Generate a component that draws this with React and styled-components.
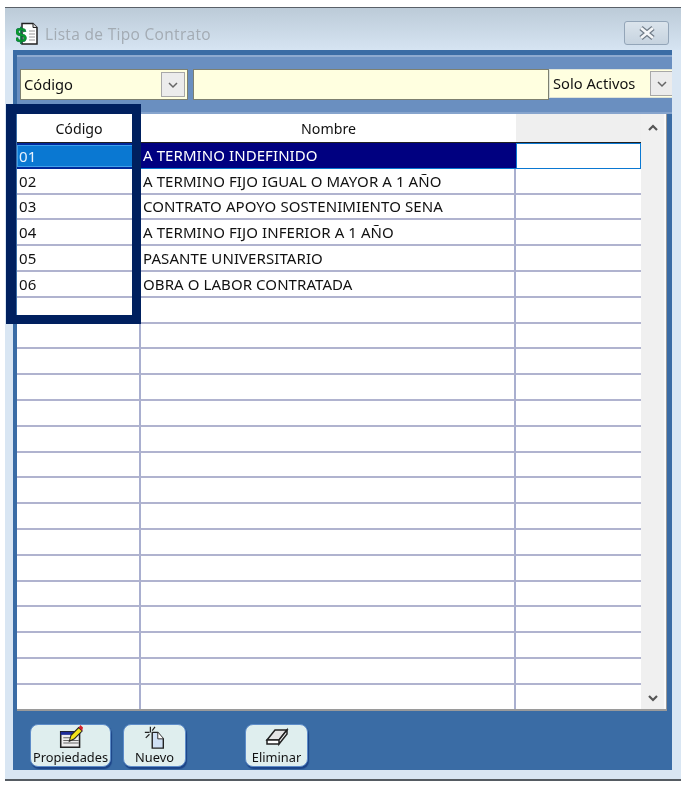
import React from "react";
import styled, { createGlobalStyle } from "styled-components";

const Global = createGlobalStyle`
  html, body { margin: 0; padding: 0; background: #fff; }
  * { box-sizing: border-box; }
`;

const Page = styled.div`
  width: 690px;
  height: 790px;
  padding: 7px 0 0 5px;
  font-family: "Noto Sans", Tahoma, sans-serif;
  color: #111;
  filter: blur(0.35px);
`;

const Win = styled.div`
  position: relative;
  width: 676px;
  height: 774px;
  border-top: 1px solid #5a6068;
  border-bottom: 2px solid #555b62;
  background: #d9e6f3;
  display: flex;
  flex-direction: column;
`;

const TitleBar = styled.div`
  height: 42px;
  flex: none;
  display: flex;
  align-items: center;
  padding: 9px 12px 0 11px;
  background: linear-gradient(#bccbd8, #d6e4f2);
`;

const TitleText = styled.span`
  margin-left: 5px;
  font-family: "Open Sans", sans-serif;
  font-size: 15.5px;
  letter-spacing: 0.32px;
  color: #a3abb3;
`;

const CloseBtn = styled.div`
  margin-left: auto;
  width: 45px;
  height: 24px;
  margin-top: -1px;
  display: flex;
  align-items: center;
  justify-content: center;
  border: 1px solid #93a5b8;
  border-radius: 3px;
  background: linear-gradient(#dbe4ec, #c6d3df);
`;

const Panel = styled.div`
  flex: none;
  margin: 0 8px;
  width: 659px;
  height: 720px;
  background: #3a6ca5;
  overflow: hidden;
  display: flex;
  flex-direction: column;
`;

const FilterArea = styled.div`
  margin: 5px 0 0 4px;
  height: 59px;
  flex: none;
  background: #6a8fc0;
  border-top: 2px solid #8eaad0;
  display: flex;
  align-items: flex-start;
  padding: 12px 0 0 3px;
  border-bottom: 2px solid #86a4cd;
`;

const Field = styled.div`
  height: ${({ $h }) => $h || 31}px;
  width: ${({ $w }) => $w}px;
  flex: none;
  margin-right: ${({ $gap }) => $gap || 0}px;
  background: #ffffe0;
  border: 1px solid ${({ $flat }) => ($flat ? "#dfe4d8" : "#7d8070")};
  display: flex;
  align-items: center;
  padding: 0 0 2px 3px;
  font-size: 14.7px;
  overflow: hidden;
`;

const ComboArrow = styled.div`
  margin: 2px ${({ $end }) => $end || 2}px 0 auto;
  width: 24px;
  height: 25px;
  flex: none;
  background: #ececec;
  border: 1px solid #a8a8a8;
  display: flex;
  align-items: center;
  justify-content: center;
`;

const GridWrap = styled.div`
  margin-left: 4px;
  width: 650px;
  height: 597px;
  flex: none;
  display: flex;
  background: #fff;
  border-bottom: 2px solid #9a9a9a;
  border-right: 1px solid #9a9a9a;
`;

const Table = styled.div`
  width: 624px;
  flex: none;
  overflow: hidden;
`;

const HeaderRow = styled.div`
  display: grid;
  grid-template-columns: 124px 375px 125px;
  height: 29px;
  border-bottom: 1px solid #222;
`;

const HeaderCell = styled.div`
  background: ${({ $empty }) => ($empty ? "#efefef" : "#fff")};
  display: flex;
  align-items: center;
  justify-content: center;
  font-size: 14.2px;
`;

const Row = styled.div`
  display: grid;
  grid-template-columns: 124px 375px 125px;
  height: 25.8px;
`;

const Cell = styled.div`
  border-right: 2px solid #a9afcf;
  border-bottom: 2px solid #b0b3cf;
  display: flex;
  align-items: center;
  padding-left: 2px;
  font-size: 15px;
  letter-spacing: 0.08px;
  white-space: nowrap;
  &:last-child { border-right: none; }
`;

const KeyCell = styled(Cell)`
  background: #0a78d2;
  color: #e8f3ff;
  border: none;
  border-top: 2px solid #00289a;
  border-bottom: 2px solid #00289a;
  box-shadow: 0 0 0 1px #3fa0ea inset;
`;

const ActiveCell = styled(Cell)`
  background: #000080;
  color: #fff;
  border: none;
  border-bottom: 1px solid #0a78d2;
`;

const EditCell = styled(Cell)`
  background: #fff;
  && { border: 1px solid #0a78d2; }
`;

const Scroll = styled.div`
  width: 25px;
  flex: none;
  background: #f0f0f0;
  border-right: 2px solid #fafafa;
  display: flex;
  flex-direction: column;
  justify-content: space-between;
  align-items: center;
  padding: 8px 0 5px;
`;

const Footer = styled.div`
  flex: 1;
  display: flex;
  align-items: flex-start;
  padding: 13px 0 0 17px;
`;

const ActionBtn = styled.div`
  width: ${({ $w }) => $w}px;
  height: 43px;
  margin-right: ${({ $gap }) => $gap}px;
  flex: none;
  border-radius: 8px;
  background: #dfeeee;
  border: 1px solid #5d8cc8;
  box-shadow: 1px 2px 1px #1c4488;
  display: flex;
  flex-direction: column;
  align-items: center;
  justify-content: flex-end;
  padding-bottom: 1px;
  font-size: 12.8px;
  line-height: 16px;
  white-space: nowrap;
`;

const Highlight = styled.div`
  position: absolute;
  left: 1px;
  top: 96px;
  width: 135px;
  height: 220px;
  border: solid #00205f;
  border-width: 10px 9px 9px 10px;
  pointer-events: none;
`;

const DollarDoc = () => (
  <svg width="24" height="26" viewBox="0 0 24 26">
    <path d="M6 2.500h11l4 4v16.500H6z" fill="#fff" stroke="#222" strokeWidth="1.500" />
    <path d="M17 2.500v4h4" fill="#ddd" stroke="#222" />
    <path d="M13 10h6M13 13h6M13 16h6M13 19h6" stroke="#999" strokeWidth="1" />
    <text x="-1" y="21" fontFamily="Liberation Sans, sans-serif" fontSize="21" fontWeight="700" fill="#0a9a2c" stroke="#064" strokeWidth="0.500">$</text>
  </svg>
);

const CloseX = () => (
  <svg width="18" height="14" viewBox="0 0 18 14">
    <path d="M3 2l12 10M15 2L3 12" stroke="#6f7a86" strokeWidth="5" />
    <path d="M3 2l12 10M15 2L3 12" stroke="#f4f6f8" strokeWidth="2.800" />
  </svg>
);

const Chevron = ({ up, color = "#666", width = 1.500, size = 12 }) => (
  <svg width={size} height={size} viewBox="0 0 12 12">
    <path d={up ? "M2 8l4-4 4 4" : "M2 4l4 4 4-4"} fill="none" stroke={color} strokeWidth={width} />
  </svg>
);

const PropsIcon = () => (
  <svg width="28" height="28" viewBox="0 0 28 28">
    <path d="M2 8h22v18H2z" fill="#eee" stroke="#222" strokeWidth="1.800" />
    <path d="M2 8h22v3.500H2z" fill="#1e2c9a" />
    <path d="M5 15h11M5 18h18M5 21h18" stroke="#666" strokeWidth="1.200" />
    <path d="M12 19l2-7 9-9 4 4-9 9z" fill="#f2e21a" stroke="#222" strokeWidth="1.200" />
    <path d="M23 3l2-3 3 3-1 4z" fill="#d3202a" />
  </svg>
);

const NewIcon = () => (
  <svg width="24" height="26" viewBox="0 0 24 26">
    <path d="M9 8h6l6 7v10H9z" fill="#cfe0f4" stroke="#222" strokeWidth="1.500" />
    <path d="M15 8v7h6" fill="#fff" stroke="#222" />
    <path d="M7 2v6M1 8h5M2 14l4-4M12 2l-3 4" stroke="#222" strokeWidth="1.300" />
  </svg>
);

const EraserIcon = () => (
  <svg width="24" height="24" viewBox="0 0 24 24">
    <path d="M2 15l8-10h12l-8 10z" fill="#e4e4e4" stroke="#222" strokeWidth="1.500" />
    <path d="M2 15h12v4H2zM14 15l8-10v4l-8 10z" fill="#fff" stroke="#222" strokeWidth="1.500" />
  </svg>
);

const ROWS = [
  ["01", "A TERMINO INDEFINIDO"],
  ["02", "A TERMINO FIJO IGUAL O MAYOR A 1 AÑO"],
  ["03", "CONTRATO APOYO SOSTENIMIENTO SENA"],
  ["04", "A TERMINO FIJO INFERIOR A 1 AÑO"],
  ["05", "PASANTE UNIVERSITARIO"],
  ["06", "OBRA O LABOR CONTRATADA"],
  ...Array.from({ length: 16 }, () => ["", ""]),
];

const App = () => (
  <>
    <Global />
    <Page>
      <Win>
        <TitleBar>
          <DollarDoc />
          <TitleText>Lista de Tipo Contrato</TitleText>
          <CloseBtn><CloseX /></CloseBtn>
        </TitleBar>
        <Panel>
          <FilterArea>
            <Field $w={168} $gap={5}>
              Código
              <ComboArrow><Chevron /></ComboArrow>
            </Field>
            <Field $w={356} />
            <Field $w={130} $h={29} $flat>
              Solo Activos
              <ComboArrow $end={4}><Chevron /></ComboArrow>
            </Field>
          </FilterArea>
          <GridWrap>
            <Table>
              <HeaderRow>
                <HeaderCell>Código</HeaderCell>
                <HeaderCell>Nombre</HeaderCell>
                <HeaderCell $empty />
              </HeaderRow>
              {ROWS.map(([code, name], i) =>
                i === 0 ? (
                  <Row key={i}>
                    <KeyCell>{code}</KeyCell>
                    <ActiveCell>{name}</ActiveCell>
                    <EditCell />
                  </Row>
                ) : (
                  <Row key={i}>
                    <Cell>{code}</Cell>
                    <Cell>{name}</Cell>
                    <Cell />
                  </Row>
                )
              )}
            </Table>
            <Scroll>
              <Chevron up color="#555" width={2.200} />
              <Chevron color="#555" width={2.200} />
            </Scroll>
          </GridWrap>
          <Footer>
            <ActionBtn $w={81} $gap={12}><PropsIcon />Propiedades</ActionBtn>
            <ActionBtn $w={63} $gap={59}><NewIcon />Nuevo</ActionBtn>
            <ActionBtn $w={63} $gap={0}><EraserIcon />Eliminar</ActionBtn>
          </Footer>
        </Panel>
        <Highlight />
      </Win>
    </Page>
  </>
);

export default App;
